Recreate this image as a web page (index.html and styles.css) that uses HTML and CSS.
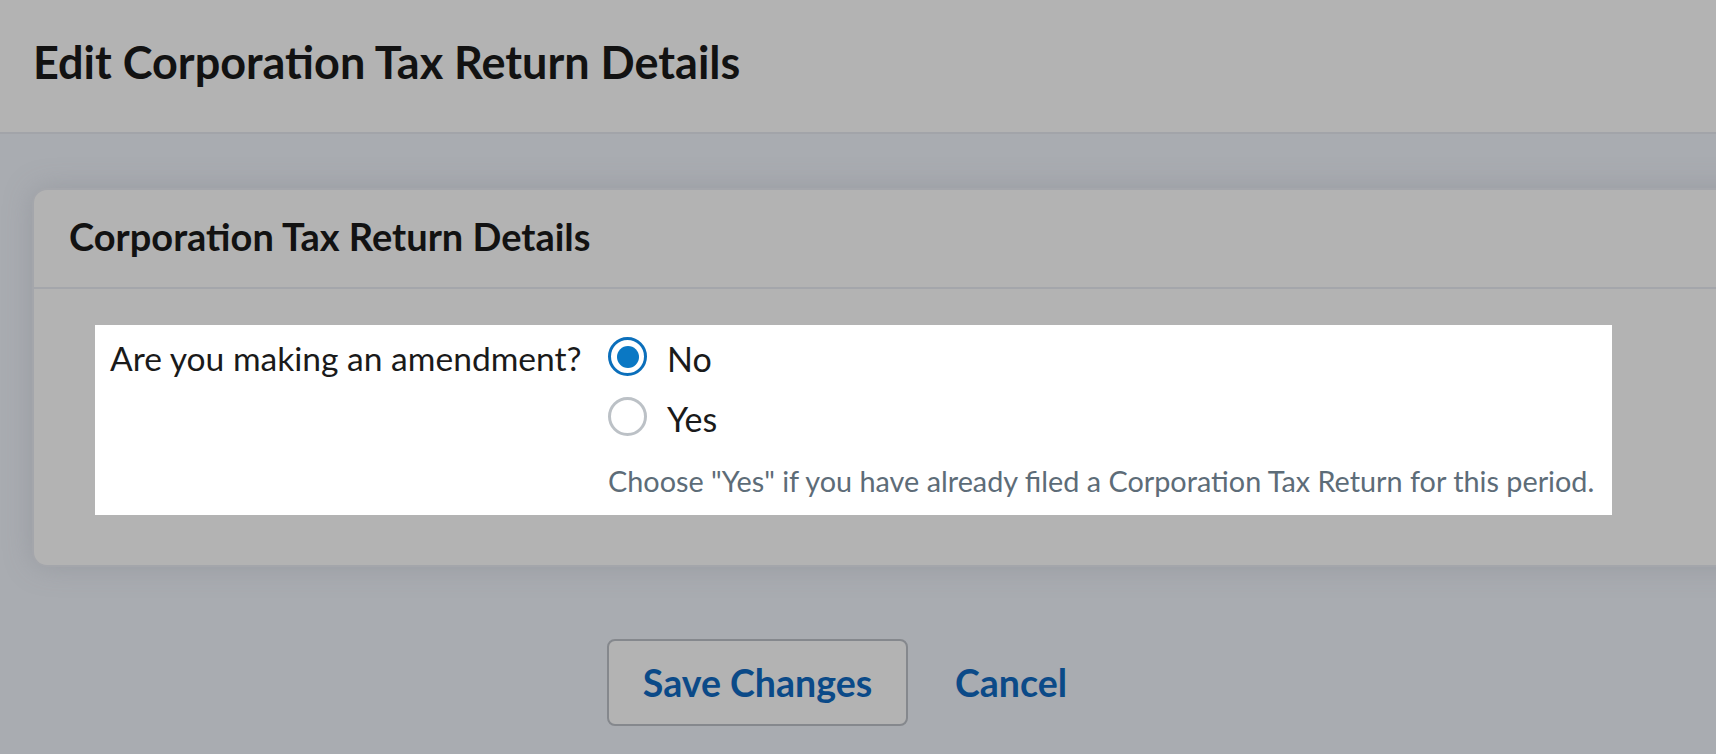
FILE: index.html
```html
<!DOCTYPE html>
<html lang="en">
<head>
<meta charset="utf-8">
<title>Edit Corporation Tax Return Details</title>
<link rel="stylesheet" href="styles.css">
</head>
<body>
<header class="page-header">
  <h1 class="page-title">Edit Corporation Tax Return Details</h1>
</header>
<main class="page-main">
  <section class="card">
    <div class="card-header">
      <h2 class="card-title">Corporation Tax Return Details</h2>
    </div>
    <div class="card-body">
      <div class="field-highlight">
        <div class="field-label">Are you making an amendment?</div>
        <div class="field-control">
          <label class="option">
            <span class="radio radio-checked"><span class="radio-dot"></span></span>
            <span class="option-text">No</span>
          </label>
          <label class="option">
            <span class="radio"></span>
            <span class="option-text">Yes</span>
          </label>
          <p class="hint">Choose "Yes" if you have already filed a Corporation Tax Return for this period.</p>
        </div>
      </div>
    </div>
  </section>
  <div class="actions">
    <div class="actions-spacer"></div>
    <div class="actions-buttons">
      <button class="btn-save" type="button">Save Changes</button>
      <a class="link-cancel" href="#">Cancel</a>
    </div>
  </div>
</main>
</body>
</html>
```

FILE: styles.css
```css
* { box-sizing: border-box; }

html, body {
  margin: 0;
  padding: 0;
}

body {
  width: 1716px;
  height: 754px;
  overflow: hidden;
  background: #a9acb1;
  font-family: Lato, "Liberation Sans", sans-serif;
  color: #151515;
}

.page-header {
  height: 134px;
  background: #b3b3b3;
  border-bottom: 2px solid #a2a4a9;
  padding: 36px 0 0 33px;
}

.page-title {
  margin: 0;
  font-size: 45px;
  line-height: 53px;
  font-weight: 700;
  color: #121212;
}

.page-main {
  padding: 54px 0 0 32px;
}

.card {
  margin-right: -60px;
  background: #b3b3b3;
  border: 2px solid #a4a6ab;
  border-radius: 15px;
  box-shadow: 0 0 28px rgba(120, 124, 132, 0.35);
}

.card-header {
  padding: 24px 0 29px 35px;
  border-bottom: 2px solid #a4a6ab;
}

.card-title {
  margin: 0;
  font-size: 38px;
  line-height: 44px;
  font-weight: 700;
  color: #121212;
}

.card-body {
  padding: 36px 0 50px 61px;
}

.field-highlight {
  width: 1517px;
  height: 190px;
  background: #ffffff;
  display: grid;
  grid-template-columns: 513px 1fr;
  padding-top: 12px;
}

.field-label {
  padding: 4px 0 0 15px;
  font-size: 33.6px;
  line-height: 35px;
  color: #1a1a1a;
}

.field-control {
  display: flex;
  flex-direction: column;
}

.option {
  display: flex;
  align-items: center;
  gap: 20px;
  height: 39px;
}

.option + .option {
  margin-top: 21px;
}

.radio {
  width: 39px;
  height: 39px;
  border-radius: 50%;
  border: 3px solid #bcc1c6;
  background: #fff;
  display: flex;
  align-items: center;
  justify-content: center;
  flex: none;
}

.radio-checked {
  border: 3px solid #0b6fbb;
}

.radio-dot {
  width: 22px;
  height: 22px;
  border-radius: 50%;
  background: #0a78c4;
}

.option-text {
  padding-top: 4px;
  font-size: 34px;
  line-height: 35px;
  color: #1a1a1a;
}

.hint {
  margin: 28px 0 0 0;
  font-size: 28.8px;
  line-height: 34px;
  color: #5d6c78;
}

.actions {
  display: grid;
  grid-template-columns: 575px 1fr;
  margin-top: 72px;
}

.actions-buttons {
  display: flex;
  align-items: center;
  gap: 47px;
}

.btn-save {
  width: 301px;
  height: 87px;
  background: #b3b3b3;
  border: 2px solid #85888d;
  border-radius: 8px;
  font-family: Lato, "Liberation Sans", sans-serif;
  font-size: 37.5px;
  font-weight: 700;
  color: #0b4a88;
  padding: 0;
}

.link-cancel {
  font-size: 37.5px;
  font-weight: 700;
  color: #0b4a88;
  text-decoration: none;
}
```
